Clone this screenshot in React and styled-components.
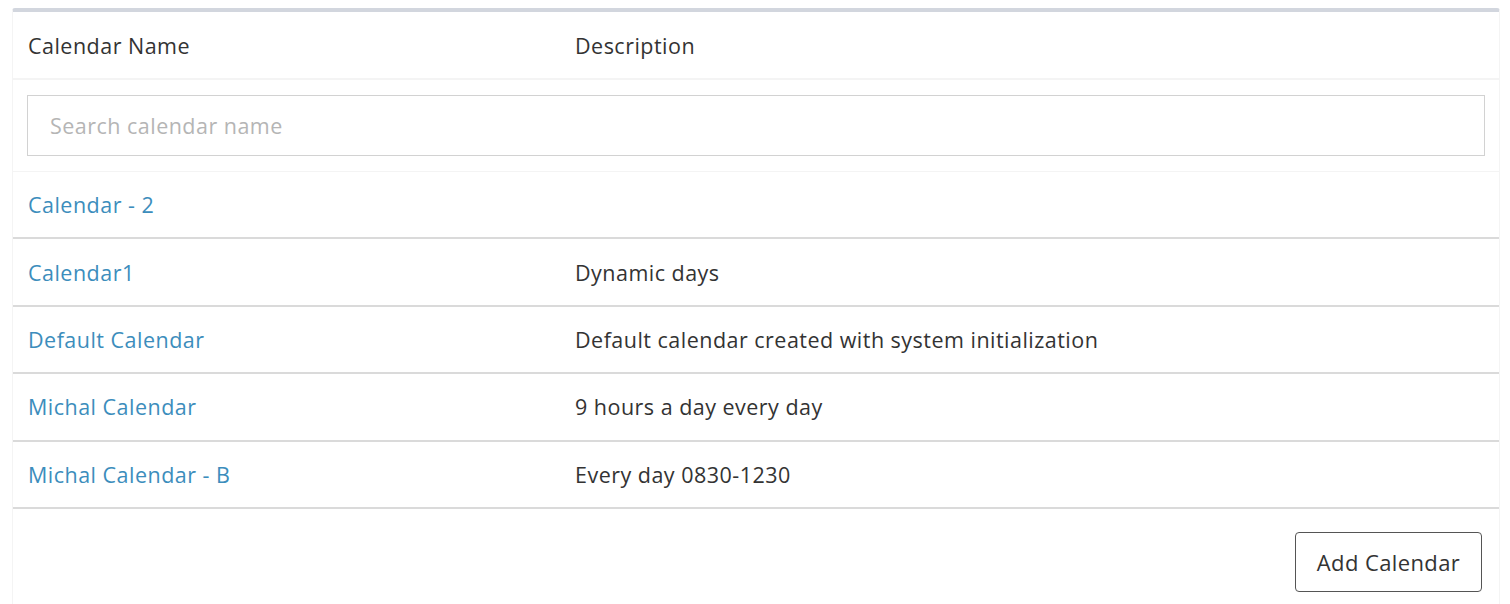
import React from "react";
import styled, { createGlobalStyle } from "styled-components";

const Global = createGlobalStyle`
  html, body { margin: 0; padding: 0; background: #fff; }
  body { font-family: "Open Sans", "Noto Sans", "Liberation Sans", sans-serif; color: #333; }
`;

const Page = styled.div`
  padding: 8px 10px 0 12px;
`;

const Panel = styled.div`
  border-top: 4px solid #d2d6de;
  border-left: 1px solid #f4f4f4;
  border-right: 1px solid #f4f4f4;
  border-radius: 3px 3px 0 0;
  background: #fff;
`;

const Table = styled.table`
  width: 100%;
  border-collapse: collapse;
  font-size: 21.5px;
  letter-spacing: 0.48px;
`;

const HeadCell = styled.th`
  text-align: left;
  font-weight: 400;
  color: #333;
  height: 66px;
  padding: 0 15px;
  border-bottom: 2px solid #f4f4f4;
  width: ${(p) => p.$w || "auto"};
`;

const SearchCell = styled.td`
  padding: 15px 14px 15px 14px;
  border-bottom: 1px solid #f4f4f4;
`;

const SearchInput = styled.input`
  box-sizing: border-box;
  width: 100%;
  height: 61px;
  border: 1px solid #d2d2d2;
  padding: 0 22px;
  font-family: inherit;
  font-size: 21.5px;
  letter-spacing: 0.48px;
  color: #333;
  outline: none;
  &::placeholder { color: #b5b5b5; }
`;

const Row = styled.tr`
  border-bottom: 2px solid #dadada;
`;

const Cell = styled.td`
  height: 65.4px;
  padding: 0 15px;
  vertical-align: middle;
`;

const Link = styled.a`
  color: #3c8dbc;
  text-decoration: none;
  cursor: pointer;
`;

const Footer = styled.div`
  display: flex;
  justify-content: flex-end;
  padding: 23px 17px 12px;
`;

const Button = styled.button`
  font-family: inherit;
  font-size: 22px;
  letter-spacing: 0.4px;
  color: #333;
  background: #fff;
  border: 1px solid #555;
  border-radius: 4px;
  width: 187px;
  height: 60px;
  cursor: pointer;
`;

const rows = [
  ["Calendar - 2", ""],
  ["Calendar1", "Dynamic days"],
  ["Default Calendar", "Default calendar created with system initialization"],
  ["Michal Calendar", "9 hours a day every day"],
  ["Michal Calendar - B", "Every day 0830-1230"],
];

export default function App() {
  return (
    <Page>
      <Global />
      <Panel>
        <Table>
          <thead>
            <tr>
              <HeadCell $w="517px">Calendar Name</HeadCell>
              <HeadCell>Description</HeadCell>
            </tr>
          </thead>
          <tbody>
            <tr>
              <SearchCell colSpan={2}>
                <SearchInput placeholder="Search calendar name" />
              </SearchCell>
            </tr>
            {rows.map(([name, desc]) => (
              <Row key={name}>
                <Cell><Link>{name}</Link></Cell>
                <Cell>{desc}</Cell>
              </Row>
            ))}
          </tbody>
        </Table>
        <Footer>
          <Button>Add Calendar</Button>
        </Footer>
      </Panel>
    </Page>
  );
}
